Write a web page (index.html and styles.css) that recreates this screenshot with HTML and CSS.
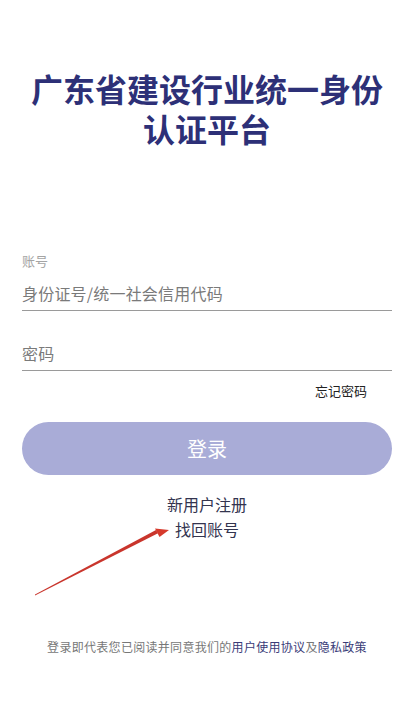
FILE: index.html
```html
<!DOCTYPE html>
<html lang="zh">
<head>
<meta charset="utf-8">
<link rel="stylesheet" href="styles.css">
</head>
<body>
<div class="page">
  <h1 class="title"><span class="tline">广东省建设行业统一身份</span><span class="tline">认证平台</span></h1>
  <div class="form">
    <div class="label">账号</div>
    <div class="field"><span class="ph">身份证号/统一社会信用代码</span></div>
    <div class="field field-pw"><span class="ph">密码</span></div>
    <div class="forgot">忘记密码</div>
    <div class="btn">登录</div>
  </div>
  <div class="links">
    <div class="link">新用户注册</div>
    <div class="link">找回账号</div>
  </div>
  <div class="footer">登录即代表您已阅读并同意我们的<span class="hl">用户使用协议</span>及<span class="hl">隐私政策</span></div>
  <svg class="arrow" width="414" height="711" viewBox="0 0 414 711">
    <polygon points="35,595.5 158,533.2 156,530 35,594.6" fill="#c9352c"/>
    <polygon points="169,530 155,528.5 159.5,537" fill="#d63a2c"/>
  </svg>
</div>
</body>
</html>
```
FILE: styles.css
```css
html, body {
  margin: 0;
  padding: 0;
  background: #ffffff;
}
body {
  font-family: "Noto Sans CJK SC", "Noto Sans", sans-serif;
}
.page {
  position: relative;
  width: 414px;
  height: 711px;
  overflow: hidden;
}
.title {
  margin: 68px 0 0;
  display: flex;
  flex-direction: column;
  align-items: center;
  font-size: 32px;
  font-weight: 700;
  color: #2d3077;
}
.tline {
  display: block;
  height: 40px;
  line-height: 40px;
}
.form {
  margin: 104px 22px 0;
  display: flex;
  flex-direction: column;
}
.label {
  font-size: 13px;
  line-height: 18px;
  color: #a4a4a4;
}
.field {
  margin-top: 5px;
  height: 35px;
  border-bottom: 1px solid #9a9a9a;
  display: flex;
  align-items: center;
}
.field-pw {
  margin-top: 24px;
}
.ph {
  font-size: 16px;
  letter-spacing: 0.2px;
  color: #7a7a7a;
}
.forgot {
  margin-top: 10px;
  align-self: flex-end;
  padding-right: 25px;
  font-size: 13px;
  line-height: 20px;
  color: #222222;
}
.btn {
  margin-top: 21px;
  height: 53px;
  border-radius: 27px;
  background: #a9acd7;
  color: #ffffff;
  font-size: 20px;
  display: flex;
  align-items: center;
  justify-content: center;
}
.links {
  margin-top: 17px;
  display: flex;
  flex-direction: column;
  align-items: center;
}
.link {
  font-size: 16px;
  line-height: 25px;
  color: #33344f;
}
.footer {
  margin-top: 96px;
  text-align: center;
  font-size: 12px;
  line-height: 18px;
  letter-spacing: 0.3px;
  color: #777777;
}
.hl {
  color: #3a3c78;
}
.arrow {
  position: absolute;
  left: 0;
  top: 0;
  pointer-events: none;
}
```
